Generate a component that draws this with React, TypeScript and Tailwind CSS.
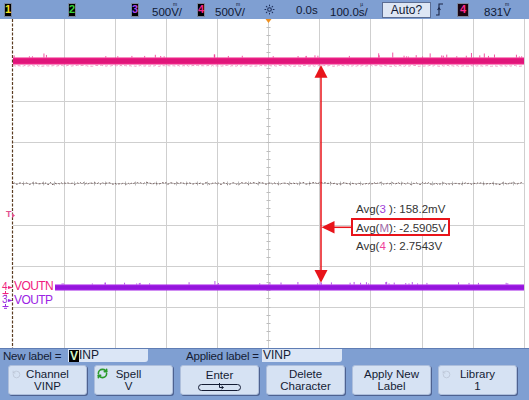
import React from 'react';
import { Sun, RotateCcw, RefreshCw } from 'lucide-react';

// graticule geometry (screen area is 529 x 329, starts under the 19px top bar)
const X0 = 12.7;
const DX = 51.1;
const DY = 41.1;

function seeded(seed: number) {
  let s = seed;
  return () => {
    s = (s * 1103515245 + 12345) % 2147483648;
    return s / 2147483648;
  };
}

function noiseLine(y: number, x1: number, x2: number, amp: number, seed: number) {
  const r = seeded(seed);
  let d = `M${x1} ${y}`;
  for (let x = x1; x <= x2; x += 1.5) {
    d += ` L${x.toFixed(1)} ${(y + (r() - 0.5) * amp).toFixed(2)}`;
  }
  return d;
}

function spikes(x1: number, x2: number, count: number, max: number, seed: number) {
  const r = seeded(seed);
  return Array.from({ length: count }, () => {
    const x = x1 + r() * (x2 - x1);
    const h = 1 + r() * r() * max;
    return { x, h };
  });
}

// scope style unit glyph: tiny prefix sitting on top of the unit letter
function Unit({ pre, base }: { pre: string; base: string }) {
  return (
    <span className="inline-flex flex-col items-center">
      <span className="text-[5px] leading-[6px]">{pre}</span>
      <span className="leading-[11px]">{base}</span>
    </span>
  );
}

function ChBox({ n, tone, wide }: { n: string; tone: string; wide?: boolean }) {
  return (
    <div
      className={
        'h-[14px] rounded-[1px] border border-[#7c879c] flex items-center justify-center text-[11px] font-bold leading-none ' +
        (wide ? 'w-[12px] bg-[#1c0410]' : 'w-[8px] bg-black')
      }
    >
      <span className={tone}>{n}</span>
    </div>
  );
}

function TopBar() {
  return (
    <div className="h-[19px] shrink-0 bg-[#7f9fd2] flex items-center pl-[4px] text-[11.5px] text-[#0f1934] leading-[14px]">
      <div className="w-[64px]"><ChBox n="1" tone="text-[#f0e020]" /></div>
      <div className="w-[63px]"><ChBox n="2" tone="text-[#3ad23a]" /></div>
      <div className="w-[21px]"><ChBox n="3" tone="text-[#a845f0]" /></div>
      <div className="w-[45px] flex items-end whitespace-nowrap"><span className="leading-[11px]">500</span><Unit pre="m" base="V" /><span className="leading-[11px]">/</span></div>
      <div className="w-[18px]"><ChBox n="4" tone="text-[#f4268a]" /></div>
      <div className="w-[49px] flex items-end whitespace-nowrap"><span className="leading-[11px]">500</span><Unit pre="m" base="V" /><span className="leading-[11px]">/</span></div>
      <div className="w-[32px]"><Sun size={11} strokeWidth={2.2} className="text-[#1a2a55]" /></div>
      <div className="w-[34px]">0.0s</div>
      <div className="w-[52px] flex items-end whitespace-nowrap"><span className="leading-[11px]">100.0</span><Unit pre="µ" base="s" /><span className="leading-[11px]">/</span></div>
      <div className="w-[54px]">
        <div className="w-[49px] h-[16px] bg-[#dde6f4] border border-[#5b6d93] flex items-center justify-center text-[12px]">
          Auto?
        </div>
      </div>
      <div className="w-[21px]">
        <svg width="7" height="13" viewBox="0 0 7 13" fill="none" stroke="#1a2545" strokeWidth="1.1">
          <path d="M0 12 H3 V1 H7" />
          <path d="M1.6 7 L3 5 L4.4 7" />
        </svg>
      </div>
      <div className="w-[27px]"><ChBox n="4" tone="text-[#ff2a90]" wide /></div>
      <div className="flex items-end whitespace-nowrap"><span className="leading-[11px]">831</span><Unit pre="m" base="V" /></div>
    </div>
  );
}

function Graticule() {
  const vx = Array.from({ length: 10 }, (_, i) => Math.round(X0 + DX * (i + 1)) + 0.5);
  const hy = Array.from({ length: 7 }, (_, j) => Math.round(DY * (j + 1)) + 0.5);
  const cx = vx[4];
  const cy = hy[3];
  const vTicks = Array.from({ length: 39 }, (_, k) => Math.round((DY / 5) * (k + 1)) + 0.5);
  const hTicks = Array.from({ length: 49 }, (_, k) => Math.round(X0 + (DX / 5) * (k + 1)) + 0.5);
  const pink = spikes(14, 523, 45, 5, 7);
  const purple = spikes(55, 523, 40, 3, 19);

  return (
    <svg className="absolute inset-0" width="529" height="329" viewBox="0 0 529 329">
      {vx.map((x) => (
        <line key={'v' + x} x1={x} y1={0} x2={x} y2={329} stroke="#cfcfcf" strokeWidth="1" />
      ))}
      {hy.map((y) => (
        <line key={'h' + y} x1={13} y1={y} x2={524} y2={y} stroke="#cfcfcf" strokeWidth="1" />
      ))}
      {vTicks.map((y) => (
        <line key={'vt' + y} x1={cx - 2} y1={y} x2={cx + 2} y2={y} stroke="#bdbdbd" strokeWidth="1" />
      ))}
      {hTicks.map((x) => (
        <line key={'ht' + x} x1={x} y1={cy - 2} x2={x} y2={cy + 2} stroke="#bdbdbd" strokeWidth="1" />
      ))}

      {/* left edge */}
      <line x1={12.5} y1={0} x2={12.5} y2={329} stroke="#5c3d22" strokeWidth="1.2" strokeDasharray="3 1.5" />

      {/* channel 1/2 noise on the centre line */}
      <path d={noiseLine(cy, 13, 524, 2.2, 3)} stroke="#7a6464" strokeWidth="1" fill="none" strokeDasharray="2 1.5" />

      {/* trigger position marker */}
      <polygon points="265.5,0 271.5,0 268.5,4" fill="#f0901e" />

      {/* channel 4 trace */}
      <path d={noiseLine(46.8, 13, 524, 1, 11)} stroke="#f29ac4" strokeWidth="1" fill="none" strokeDasharray="3 2" />
      {pink.map((s, i) => (
        <line key={'p' + i} x1={s.x} y1={38.5} x2={s.x} y2={38.5 - s.h} stroke="#ee2a8a" strokeWidth="0.8" />
      ))}
      <rect x={13} y={38.5} width={511} height={7} fill="#ec1f84" />
      <rect x={13} y={40} width={511} height={4} fill="#e0157a" />

      {/* channel 3 trace */}
      {purple.map((s, i) => (
        <line key={'u' + i} x1={s.x} y1={265.5} x2={s.x} y2={265.5 - s.h} stroke="#a62ae6" strokeWidth="0.8" />
      ))}
      <rect x={54} y={265.5} width={470} height={6} fill="#a21ee6" />
      <rect x={54} y={267} width={470} height={3} fill="#9416dc" />

      {/* measurement arrows */}
      <g fill="#e8141a" stroke="#e8141a">
        <line x1={321} y1={56} x2={321} y2={253} strokeWidth="1.5" />
        <polygon points="321,46 314.5,58.7 327.5,58.7" stroke="none" />
        <polygon points="321,263.7 314.5,251 327.5,251" stroke="none" />
        <line x1={333} y1={208.3} x2={351} y2={208.3} strokeWidth="1.5" />
        <polygon points="321.5,208.3 334.5,202 334.5,214.5" stroke="none" />
      </g>
    </svg>
  );
}

function Ground({ color }: { color: string }) {
  return (
    <svg width="7" height="5" viewBox="0 0 7 5" fill="none" stroke={color} strokeWidth="1">
      <path d="M3.5 0 V2 M0.5 2.5 H6.5 M2 4.3 H5" />
    </svg>
  );
}

function Screen() {
  return (
    <div className="relative h-[329px] shrink-0 bg-white">
      <Graticule />

      {/* trigger level marker */}
      <div className="absolute left-[6px] top-[191px] flex items-end text-[#e2508e]">
        <span className="text-[9px] leading-[9px] font-bold">T</span>
        <svg width="3" height="5" viewBox="0 0 3 5" className="mb-[1px]">
          <polygon points="0,0 3,2.5 0,5" fill="#e2508e" />
        </svg>
      </div>

      {/* ground markers */}
      <div className="absolute left-[2px] top-[264px] flex flex-col items-start">
        <div className="flex items-center text-[#f0247e]">
          <span className="text-[10px] leading-[8px]">4</span>
          <svg width="5" height="5" viewBox="0 0 5 5"><polygon points="0,1 5,2.5 0,4" fill="#f0247e" /></svg>
        </div>
        <Ground color="#f0247e" />
      </div>
      <div className="absolute left-[2px] top-[277px] flex flex-col items-start">
        <div className="flex items-center text-[#9a2ae0]">
          <span className="text-[10px] leading-[8px]">3</span>
          <svg width="5" height="5" viewBox="0 0 5 5"><polygon points="0,1 5,2.5 0,4" fill="#9a2ae0" /></svg>
        </div>
        <Ground color="#9a2ae0" />
      </div>

      {/* channel labels */}
      <div className="absolute left-[14px] top-[261px] bg-white pr-[2px] text-[12px] leading-[13.5px] tracking-[-0.6px]">
        <div className="text-[#f0207e]">VOUTN</div>
        <div className="text-[#9b24e4]">VOUTP</div>
      </div>

      {/* measurements */}
      <div className="absolute left-[351px] top-[199px] w-[99px] h-[18px] border-2 border-[#e8141a] bg-white" />
      <div className="absolute left-[356px] top-[181px] text-[11.5px] leading-[18.5px] text-[#333] whitespace-nowrap">
        <div>Avg(<span className="text-[#a040d8]">3</span> ): 158.2mV</div>
        <div>Avg(<span className="text-[#a06aa8]">M</span>): -2.5905V</div>
        <div>Avg(<span className="text-[#f0409a]">4</span> ): 2.7543V</div>
      </div>
    </div>
  );
}

function SoftButton({ children, className = '' }: { children: React.ReactNode; className?: string }) {
  return (
    <div
      className={
        'relative w-[79px] h-[30px] rounded-[3px] bg-[#d6e2f3] border border-[#aebfdc] shadow-[1px_1px_0_#4e6290] flex flex-col items-center justify-center text-[11.5px] leading-[12.5px] text-[#141c34] ' +
        className
      }
    >
      {children}
    </div>
  );
}

function BottomPanel() {
  return (
    <div className="flex-1 bg-[#7f9fd2] border-t border-[#5f7db4] flex flex-col">
      <div className="h-[16px] flex items-start text-[11.5px] leading-[13px] text-[#141c34]">
        <span className="ml-[3px] w-[65px] mt-[1px] whitespace-nowrap tracking-[-0.2px]">New label =</span>
        <div className="w-[80px] h-[13px] bg-[#dbe6f6] rounded-br-[3px] flex items-center pl-[1px] text-[12px]">
          <span className="bg-black text-[#d4f5c8] font-bold px-[1px] leading-[12px]">V</span>
          <span>INP</span>
        </div>
        <span className="ml-[38px] w-[76px] mt-[1px] whitespace-nowrap tracking-[-0.2px]">Applied label =</span>
        <div className="w-[80px] h-[13px] bg-[#dbe6f6] rounded-br-[3px] flex items-center pl-[1px] text-[12px]">VINP</div>
      </div>
      <div className="flex gap-[7px] pl-[8px]">
        <SoftButton>
          <RotateCcw size={9} strokeWidth={2} className="absolute left-[3px] top-[4px] text-[#b9c3d3]" />
          <span>Channel</span>
          <span>VINP</span>
        </SoftButton>
        <SoftButton className="pr-[10px]">
          <RefreshCw size={11} strokeWidth={3.5} className="absolute left-[2px] top-[2px] text-[#2b9a2b]" />
          <span>Spell</span>
          <span>V</span>
        </SoftButton>
        <SoftButton>
          <span>Enter</span>
          <svg width="43" height="8" viewBox="0 0 43 8" fill="none" stroke="#141c34" strokeWidth="1" className="mt-[2px]">
            <rect x="0.5" y="1.5" width="42" height="6" rx="3" />
            <path d="M21.5 0 V4.5 H25" />
            <path d="M23.5 3 L25.5 4.5 L23.5 6" />
          </svg>
        </SoftButton>
        <SoftButton>
          <span>Delete</span>
          <span>Character</span>
        </SoftButton>
        <SoftButton>
          <span>Apply New</span>
          <span>Label</span>
        </SoftButton>
        <SoftButton>
          <RotateCcw size={9} strokeWidth={2} className="absolute left-[3px] top-[4px] text-[#b9c3d3]" />
          <span>Library</span>
          <span>1</span>
        </SoftButton>
      </div>
    </div>
  );
}

export default function App() {
  return (
    <div className="w-[529px] h-[400px] bg-white flex flex-col overflow-hidden font-['Liberation_Sans',Arial,sans-serif]">
      <TopBar />
      <Screen />
      <BottomPanel />
    </div>
  );
}
